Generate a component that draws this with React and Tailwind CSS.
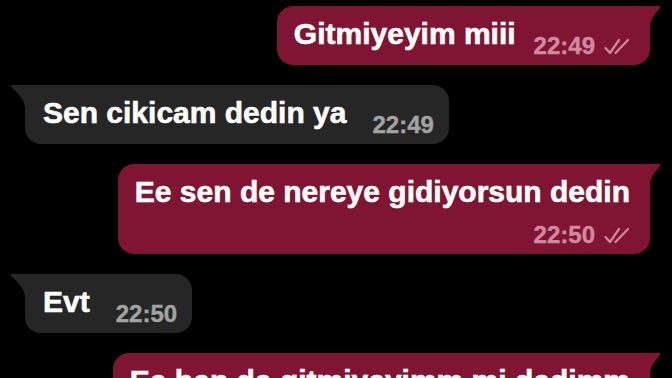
import clsx from 'clsx';

const font = { fontFamily: '"Liberation Sans", Arial, sans-serif' };

function Checks() {
  return (
    <svg width="27" height="18" viewBox="0 0 27 18" fill="none" className="mb-[4px] ml-[8px] shrink-0">
      <path d="M2.5 10 L7 15 L16 2" stroke="#cf8aa0" strokeWidth="2.2" strokeLinecap="round" strokeLinejoin="round" />
      <path d="M12.5 15 L25 2" stroke="#cf8aa0" strokeWidth="2.2" strokeLinecap="round" />
    </svg>
  );
}

function Tail({ out }) {
  if (out) {
    return (
      <svg width="12" height="19" viewBox="0 0 12 19" className="absolute top-0 left-[calc(100%-1px)]">
        <path d="M0 0 H10.5 Q12 0 11.2 1.4 C7 7 2.5 11 1 19 H0 Z" fill="#7f1532" />
      </svg>
    );
  }
  return (
    <svg width="16" height="22" viewBox="0 0 16 22" className="absolute top-0 right-[calc(100%-1px)]">
      <path d="M16 0 H1.5 Q0 0 0.8 1.4 C7 8 13.5 12 15 22 H16 Z" fill="#262626" />
    </svg>
  );
}

function Time({ out, time }) {
  return (
    <div className="flex items-end shrink-0">
      <span
        className={clsx(
          'text-[24px] leading-[28px] font-bold',
          out ? 'text-[#cf8aa0] [-webkit-text-stroke:0.4px_#cf8aa0]' : 'text-[#a3a3a3] [-webkit-text-stroke:0.4px_#a3a3a3]'
        )}
      >
        {time}
      </span>
      {out && <Checks />}
    </div>
  );
}

function Bubble({ out, text, time, stack }) {
  return (
    <div
      className={clsx(
        'relative rounded-[16px] pt-[10px] pb-[5px]',
        out ? 'self-end mr-[22px] bg-[#7f1532] rounded-tr-none pl-[17px] pr-[20px]' : 'self-start ml-[25px] bg-[#262626] rounded-tl-none pl-[18px] pr-[15px]',
        stack ? 'flex flex-col' : 'flex items-end'
      )}
    >
      <Tail out={out} />
      <span
        className={clsx(
          'text-white text-[30px] leading-[36px] font-bold whitespace-nowrap [-webkit-text-stroke:0.6px_#fff]',
          stack ? 'mb-[11px]' : 'mb-[8px]'
        )}
      >
        {text}
      </span>
      <div className={clsx(stack ? 'self-end' : out ? 'ml-[18px]' : 'ml-[26px]')}>
        <Time out={out} time={time} />
      </div>
    </div>
  );
}

export default function App() {
  return (
    <div className="w-[672px] h-[378px] bg-black overflow-hidden flex flex-col gap-[20px] pt-[6px]" style={font}>
      <Bubble out text="Gitmiyeyim miii" time="22:49" />
      <Bubble text="Sen cikicam dedin ya" time="22:49" />
      <Bubble out stack text="Ee sen de nereye gidiyorsun dedin" time="22:50" />
      <Bubble text="Evt" time="22:50" />
      <Bubble out stack text="Ee ben de gitmiyeyimm mi dedimm" time="22:51" />
    </div>
  );
}
